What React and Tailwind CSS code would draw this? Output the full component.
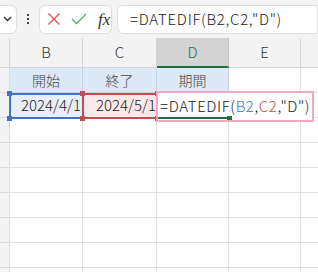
import React from 'react';

const font = { fontFamily: '"Noto Sans CJK JP", "Noto Sans", sans-serif' };

function Corner({ className }) {
  return <div className={`absolute w-[5px] h-[5px] ${className}`} />;
}

export default function App() {
  const rows = [0, 1, 2, 3, 4, 5, 6, 7];
  return (
    <div className="w-[318px] h-[272px] overflow-hidden bg-white relative" style={font}>
      {/* formula bar */}
      <div className="h-[38px] bg-[#f3f3f3] flex items-center gap-0 relative">
        <div className="ml-[-8px] w-[25px] h-[29px] bg-white border border-[#dedede] rounded-md flex items-center justify-end pr-[4px]">
          <svg width="9" height="6" viewBox="0 0 9 6"><path d="M1 1l3.5 3.5L8 1" fill="none" stroke="#333" strokeWidth="1.5" /></svg>
        </div>
        <div className="w-[22px] flex flex-col items-center gap-[2px]">
          <div className="w-[2px] h-[2px] bg-[#444]" />
          <div className="w-[2px] h-[2px] bg-[#444]" />
          <div className="w-[2px] h-[2px] bg-[#444]" />
        </div>
        <div className="w-[73px] h-[29px] bg-white border border-[#dedede] rounded-md flex items-center pl-[7px] gap-[10px]">
          <svg width="14" height="14" viewBox="0 0 14 14"><path d="M1.5 1.5l11 11M12.5 1.5l-11 11" stroke="#d9534f" strokeWidth="1.3" /></svg>
          <svg width="16" height="12" viewBox="0 0 16 12"><path d="M1 6l4.5 4.5L15 1" fill="none" stroke="#4caf6a" strokeWidth="1.3" /></svg>
          <span className="italic text-[17px] leading-none text-[#333] ml-[1px]" style={{ fontFamily: '"Liberation Serif", serif' }}>fx</span>
        </div>
        <div className="ml-[5px] flex-1 h-[29px] bg-white border border-[#dedede] rounded-l-md flex items-center pl-[12px] text-[15px] tracking-[0.7px] font-light text-[#222] whitespace-nowrap">
          =DATEDIF(B2,C2,"D")
        </div>
      </div>

      {/* sheet */}
      <div className="grid grid-cols-[10px_73px_74px_72px_72px_30px] text-[14px] text-[#333] font-light">
        <div className="h-[30px] bg-[#f3f3f3] border-r border-b border-[#d4d4d4]" />
        <div className="h-[30px] bg-[#f3f3f3] border-r border-b border-[#d4d4d4] flex items-center justify-center text-[15px]">B</div>
        <div className="h-[30px] bg-[#f3f3f3] border-r border-b border-[#d4d4d4] flex items-center justify-center text-[15px]">C</div>
        <div className="h-[30px] bg-[#d3d3d3] border-r border-[#c4c4c4] border-b-2 border-b-[#1e6e3e] flex items-center justify-center text-[15px] text-[#1e6e3e]">D</div>
        <div className="h-[30px] bg-[#f3f3f3] border-r border-b border-[#d4d4d4] flex items-center justify-center text-[15px]">E</div>
        <div className="h-[30px] bg-[#f3f3f3] border-b border-[#d4d4d4]" />

        <div className="h-[25px] bg-[#f3f3f3] border-r border-b border-[#dcdcdc]" />
        <div className="h-[25px] bg-[#dde9f6] border-r border-b border-[#c9d3de] flex items-center justify-center text-[#444]">開始</div>
        <div className="h-[25px] bg-[#dde9f6] border-r border-b border-[#c9d3de] flex items-center justify-center text-[#444]">終了</div>
        <div className="h-[25px] bg-[#dde9f6] border-r border-b border-[#c9d3de] flex items-center justify-center text-[#444]">期間</div>
        <div className="h-[25px] border-r border-b border-[#e1e1e1]" />
        <div className="h-[25px] border-b border-[#e1e1e1]" />

        <div className="h-[25px] bg-[#f3f3f3] border-r border-b border-[#dcdcdc]" />
        <div className="h-[25px] bg-[#e9eff9] flex items-center justify-end pr-[2px] text-[15px] text-[#222]">2024/4/1</div>
        <div className="h-[25px] bg-[#fbe9e9] flex items-center justify-end pr-[1px] text-[15px] text-[#222]">2024/5/1</div>
        <div className="h-[25px] flex items-center" />
        <div className="h-[25px]" />
        <div className="h-[25px] border-b border-[#e1e1e1]" />

        {rows.map((r) => (
          <React.Fragment key={r}>
            <div className="h-[25px] bg-[#f3f3f3] border-r border-b border-[#dcdcdc]" />
            <div className="h-[25px] border-r border-b border-[#e1e1e1]" />
            <div className="h-[25px] border-r border-b border-[#e1e1e1]" />
            <div className="h-[25px] border-r border-b border-[#e1e1e1]" />
            <div className="h-[25px] border-r border-b border-[#e1e1e1]" />
            <div className="h-[25px] border-b border-[#e1e1e1]" />
          </React.Fragment>
        ))}
      </div>

      {/* B2 reference box */}
      <div className="absolute left-[9px] top-[93px] w-[75px] h-[26px] border-2 border-[#4472c4]" />
      <Corner className="left-[7px] top-[91px] bg-[#4472c4]" />
      <Corner className="left-[7px] top-[116px] bg-[#4472c4]" />
      {/* C2 reference box */}
      <div className="absolute left-[82px] top-[93px] w-[76px] h-[26px] border-2 border-[#c0504d]" />
      <Corner className="left-[80px] top-[91px] bg-[#c0504d]" />
      <Corner className="left-[80px] top-[116px] bg-[#c0504d]" />
      <Corner className="left-[155px] top-[91px] bg-[#c0504d]" />
      <Corner className="left-[155px] top-[116px] bg-[#c0504d]" />

      {/* D2 edit box */}
      <div className="absolute left-[156px] top-[91px] w-[158px] h-[31px] border-2 border-[#f2a7c3] bg-white flex items-center pl-[2px] text-[15px] tracking-[0.6px] font-light text-[#222] whitespace-nowrap">
        =DATEDIF(<span className="text-[#4472c4]">B2</span>,<span className="text-[#c0504d]">C2</span>,"D")
      </div>
      <div className="absolute left-[158px] top-[117px] w-[70px] h-[2px] bg-[#1e6e3e]" />
      <div className="absolute left-[227px] top-[116px] w-[5px] h-[4px] bg-[#1e6e3e]" />
    </div>
  );
}
